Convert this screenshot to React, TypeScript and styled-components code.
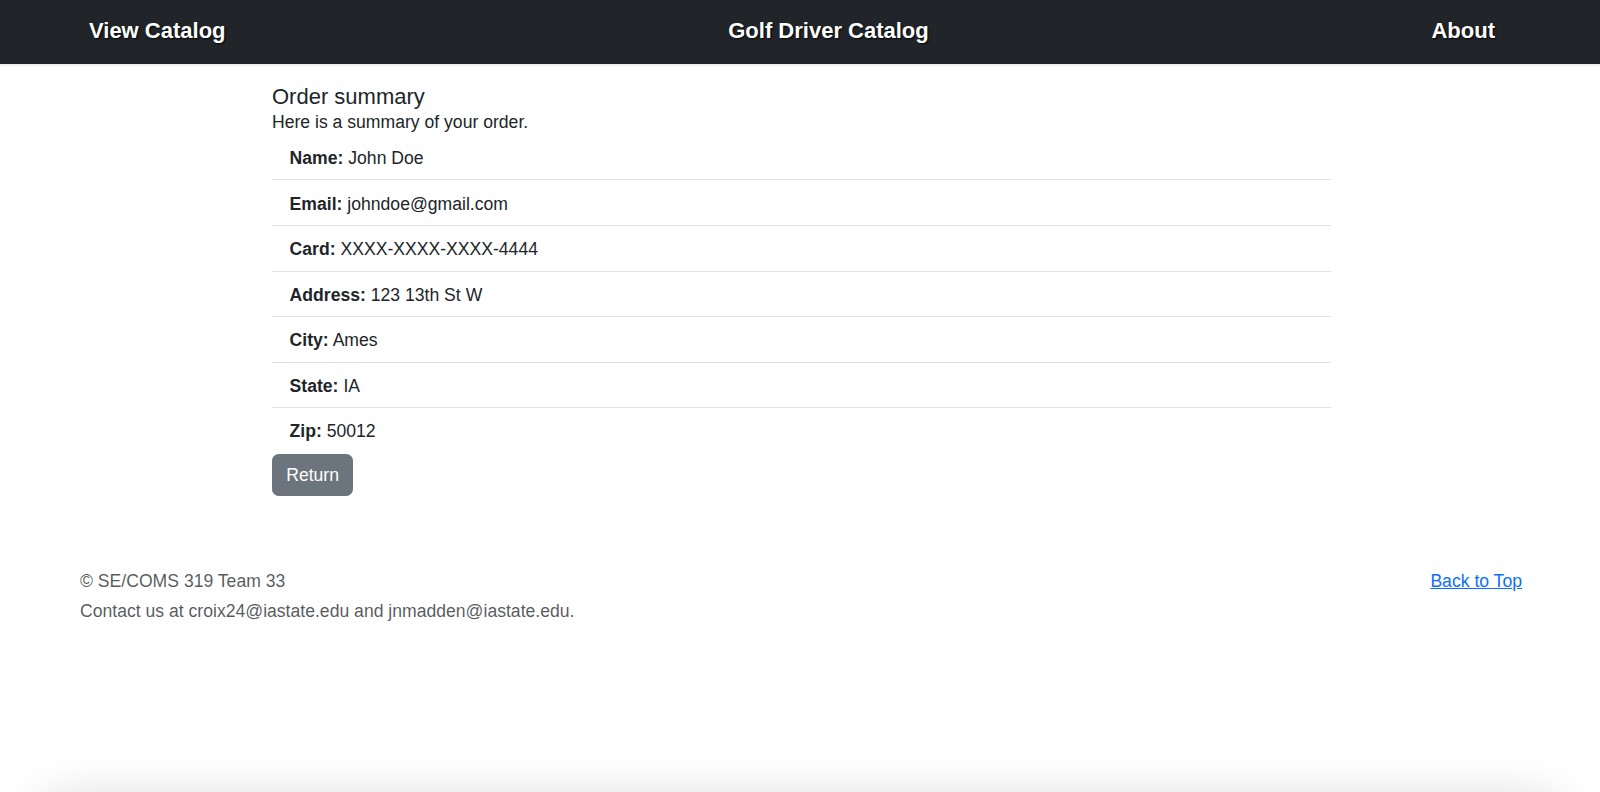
import React from "react";
import styled, { createGlobalStyle } from "styled-components";

const GlobalStyle = createGlobalStyle`
  * { box-sizing: border-box; }
  html, body { margin: 0; padding: 0; background: #ffffff; }
  body {
    font-family: "Liberation Sans", Arial, Helvetica, sans-serif;
    font-size: 17.6px;
    line-height: 26.4px;
    color: #212529;
    overflow: hidden;
  }
`;

const Page = styled.div`
  min-height: 792px;
  display: flex;
  flex-direction: column;
`;

const NavBar = styled.header`
  height: 64px;
  background: #212529;
  display: flex;
  align-items: center;
  justify-content: space-between;
  padding: 0 105px 2px 89px;
  box-shadow: 0 1px 3px rgba(0, 0, 0, 0.12);
`;

const NavLink = styled.a`
  color: #ffffff;
  font-size: 22px;
  font-weight: 700;
  line-height: 26.4px;
  text-decoration: none;
  text-shadow: 1px 1px 2px rgba(0, 0, 0, 0.9);
  cursor: pointer;
`;

const Main = styled.main`
  padding: 20px 269px 0 272px;
`;

const Title = styled.h5`
  margin: 0;
  font-size: 22px;
  font-weight: 500;
  line-height: 26.4px;
`;

const Subtitle = styled.p`
  margin: 0;
  line-height: 24.4px;
`;

const List = styled.ul`
  list-style: none;
  margin: 0;
  padding: 0;
`;

const Row = styled.li`
  padding: 10.1px 17.6px 8.1px;
  border-bottom: 1px solid #dee2e6;
  &:last-child {
    border-bottom: none;
  }
`;

const Label = styled.strong`
  font-weight: 700;
`;

const ReturnButton = styled.button`
  margin-top: 1px;
  font-family: inherit;
  font-size: 17.6px;
  line-height: 26.4px;
  padding: 6.6px 13.2px;
  color: #ffffff;
  background: #6c757d;
  border: 1px solid #6c757d;
  border-radius: 6.6px;
  cursor: pointer;
`;

const Footer = styled.footer`
  padding: 72px 78px 0 80px;
  color: rgba(33, 37, 41, 0.75);
`;

const FooterTop = styled.div`
  display: flex;
  justify-content: space-between;
  align-items: flex-start;
`;

const FooterLine = styled.p<{ $gap?: boolean }>`
  margin: 0 0 ${(p) => (p.$gap ? "4.4px" : "0")} 0;
`;

const TopLink = styled.a`
  color: #0d6efd;
  text-decoration: underline;
  cursor: pointer;
`;

const BottomShadow = styled.div`
  position: fixed;
  left: 40px;
  right: 40px;
  top: 800px;
  height: 60px;
  border-radius: 30px;
  background: #ffffff;
  box-shadow: 0 0 45px 6px rgba(0, 0, 0, 0.13);
`;

const rows: [string, string][] = [
  ["Name:", "John Doe"],
  ["Email:", "johndoe@gmail.com"],
  ["Card:", "XXXX-XXXX-XXXX-4444"],
  ["Address:", "123 13th St W"],
  ["City:", "Ames"],
  ["State:", "IA"],
  ["Zip:", "50012"],
];

export default function App() {
  return (
    <>
      <GlobalStyle />
      <Page>
        <NavBar>
          <NavLink>View Catalog</NavLink>
          <NavLink>Golf Driver Catalog</NavLink>
          <NavLink>About</NavLink>
        </NavBar>
        <Main>
          <Title>Order summary</Title>
          <Subtitle>Here is a summary of your order.</Subtitle>
          <List>
            {rows.map(([label, value]) => (
              <Row key={label}>
                <Label>{label}</Label> {value}
              </Row>
            ))}
          </List>
          <ReturnButton>Return</ReturnButton>
        </Main>
        <Footer>
          <FooterTop>
            <FooterLine $gap>© SE/COMS 319 Team 33</FooterLine>
            <TopLink>Back to Top</TopLink>
          </FooterTop>
          <FooterLine>
            Contact us at croix24@iastate.edu and jnmadden@iastate.edu.
          </FooterLine>
        </Footer>
      </Page>
      <BottomShadow />
    </>
  );
}
